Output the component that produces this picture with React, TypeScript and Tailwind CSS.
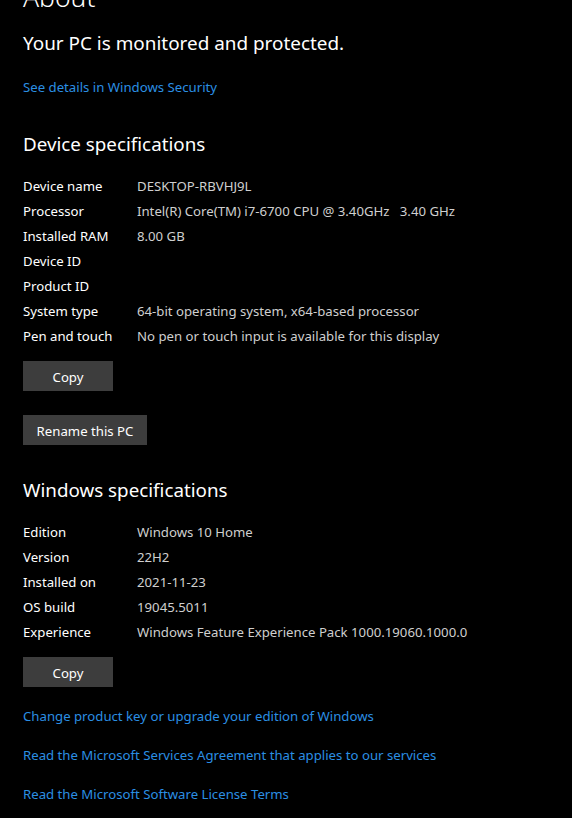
import React from 'react';

const deviceSpecs: Array<[string, string]> = [
  ['Device name', 'DESKTOP-RBVHJ9L'],
  ['Processor', 'Intel(R) Core(TM) i7-6700 CPU @ 3.40GHz   3.40 GHz'],
  ['Installed RAM', '8.00 GB'],
  ['Device ID', ''],
  ['Product ID', ''],
  ['System type', '64-bit operating system, x64-based processor'],
  ['Pen and touch', 'No pen or touch input is available for this display'],
];

const windowsSpecs: Array<[string, string]> = [
  ['Edition', 'Windows 10 Home'],
  ['Version', '22H2'],
  ['Installed on', '2021-11-23'],
  ['OS build', '19045.5011'],
  ['Experience', 'Windows Feature Experience Pack 1000.19060.1000.0'],
];

function SpecRow({ label, value }: { label: string; value: string }) {
  return (
    <div className="flex h-[25px] items-center text-[13.2px]">
      <span className="w-[114px] shrink-0 text-white">{label}</span>
      <span className="whitespace-pre text-[#cfcfcf]">{value}</span>
    </div>
  );
}

function GrayButton({ children, width }: { children: React.ReactNode; width: string }) {
  return (
    <button className={`h-[30px] ${width} bg-[#3d3d3d] pt-[3px] text-[13.2px] text-white`}>{children}</button>
  );
}

export default function App() {
  return (
    <div
      className="h-[818px] w-[572px] overflow-hidden bg-black pl-[23px] text-white"
      style={{ fontFamily: '"Noto Sans", "Open Sans", sans-serif' }}
    >
      {/* page title, scrolled partly out of view */}
      <h1 className="-mt-[23px] text-[26.5px] font-light leading-[40px]">About</h1>

      <p className="mt-[12px] text-[18.9px] leading-[28px]">Your PC is monitored and protected.</p>
      <a className="mt-[20px] block text-[13.2px] leading-[20px] text-[#2b8fe3]">See details in Windows Security</a>

      {/* Device specifications */}
      <h2 className="mt-[33px] text-[18.8px] leading-[28px]">Device specifications</h2>
      <div className="mt-[16px]">
        {deviceSpecs.map(([label, value]) => (
          <SpecRow key={label} label={label} value={value} />
        ))}
      </div>
      <div className="mt-[12px] flex flex-col items-start gap-[24px]">
        <GrayButton width="w-[90px]">Copy</GrayButton>
        <GrayButton width="w-[124px]">Rename this PC</GrayButton>
      </div>

      {/* Windows specifications */}
      <h2 className="mt-[31px] text-[18.8px] leading-[28px]">Windows specifications</h2>
      <div className="mt-[16px]">
        {windowsSpecs.map(([label, value]) => (
          <SpecRow key={label} label={label} value={value} />
        ))}
      </div>
      <div className="mt-[12px]">
        <GrayButton width="w-[90px]">Copy</GrayButton>
      </div>

      <div className="mt-[19px] flex flex-col gap-[19px] text-[13.2px] leading-[20px] text-[#2b8fe3]">
        <a>Change product key or upgrade your edition of Windows</a>
        <a>Read the Microsoft Services Agreement that applies to our services</a>
        <a>Read the Microsoft Software License Terms</a>
      </div>
    </div>
  );
}
